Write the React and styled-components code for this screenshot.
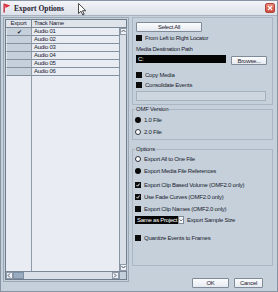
import { Fragment } from 'react'
import styled, { createGlobalStyle } from 'styled-components'

const Global = createGlobalStyle`
  html, body { margin: 0; padding: 0; background: #c5d0da; }
  * { box-sizing: border-box; }
`

const Window = styled.div`
  position: relative;
  width: 278px;
  height: 292px;
  display: flex;
  flex-direction: column;
  background: #c5d0da;
  border: 1px solid #8794a3;
  overflow: hidden;
  font-family: "Liberation Sans", Arial, sans-serif;
  font-size: 6px;
  letter-spacing: -0.25px;
  color: #1b2330;
`
const TitleBar = styled.div`
  height: 15px;
  flex: none;
  display: flex;
  align-items: center;
  padding: 0 2px 0 2px;
  gap: 3px;
  background: linear-gradient(#f3f4f8, #dde1e9);
  border-bottom: 1px solid #a9b3c0;
`
const Title = styled.span`
  flex: 1;
  font-family: "Liberation Serif", "Times New Roman", serif;
  font-weight: bold;
  font-size: 7.5px;
  letter-spacing: 0;
  color: #1e2230;
`
const CloseBtn = styled.div`
  width: 10px;
  height: 10px;
  border-radius: 2px;
  background: linear-gradient(#ee8a7c, #cf4a3a);
  border: 1px solid #b0473c;
  display: flex;
  align-items: center;
  justify-content: center;
`
const Cursor = styled.svg`
  position: absolute;
  left: 77px;
  top: 2px;
`
const Body = styled.div`
  flex: 1;
  display: flex;
  gap: 3px;
  padding: 1px 3px 3px 2px;
`
const LeftPanel = styled.div`
  width: 126px;
  height: 265px;
  padding: 1px;
  border: 1px solid #9aa7b5;
  display: flex;
`
const ListBox = styled.div`
  flex: 1;
  display: grid;
  grid-template-columns: 1fr 7px;
  grid-template-rows: 8px 1fr 8px;
  border: 1px solid #6f7d8c;
  background: #e9ecf2;
`
const Header = styled.div`
  grid-column: 1 / 3;
  display: grid;
  grid-template-columns: 25px 1fr;
  background: #dfe4eb;
  border-bottom: 1px solid #7c8896;
`
const HeadCell = styled.div`
  display: flex;
  align-items: center;
  justify-content: ${(p) => (p.$center ? 'center' : 'flex-start')};
  padding-left: ${(p) => (p.$center ? 0 : 2)}px;
  border-left: ${(p) => (p.$center ? 'none' : '1px solid #7c8896')};
  line-height: 7px;
`
const Rows = styled.div`
  display: grid;
  grid-template-columns: 25px 1fr;
  grid-auto-rows: 8px;
  align-content: start;
  background: linear-gradient(to right, transparent 25px, #8f9aa7 25px, #8f9aa7 26px, transparent 26px);
`
const ExportCell = styled.div`
  background: #c6d0da;
  border-bottom: 1px solid #8391a0;
  border-left: 1px solid #e4e9ef;
  display: flex;
  align-items: center;
  justify-content: center;
  font-size: 6px;
`
const NameCell = styled.div`
  border-left: 1px solid #8f9aa7;
  border-bottom: 1px solid #8391a0;
  padding-left: 2px;
  display: flex;
  align-items: center;
  line-height: 7px;
`
const VScroll = styled.div`
  display: flex;
  flex-direction: column;
  justify-content: space-between;
  background: #d9dfe7;
  border-left: 1px solid #8794a3;
`
const HScroll = styled.div`
  display: flex;
  align-items: stretch;
  background: #d9dfe7;
  border-top: 1px solid #7c8896;
`
const Corner = styled.div`
  background: #c5d0da;
  border-top: 1px solid #7c8896;
  border-left: 1px solid #8794a3;
`
const Arrow = styled.div`
  width: ${(p) => p.$w || 6}px;
  height: ${(p) => p.$h || 6}px;
  background: #eef1f5;
  border: 1px solid #8e9aa8;
  display: flex;
  align-items: center;
  justify-content: center;
  flex: none;
`
const Thumb = styled.div`
  width: 11px;
  background: #9aacbf;
  border: 1px solid #7d8fa3;
`
const Spacer = styled.div`
  flex: 1;
`
const RightPanel = styled.div`
  flex: 1;
  display: flex;
  flex-direction: column;
  margin-right: 1px;
`
const TopBox = styled.div`
  display: flex;
  flex-direction: column;
  align-items: flex-start;
  border: 1px solid #aab6c2;
  padding: 4px 3px 3px 3px;
`
const Button = styled.div`
  width: ${(p) => p.$w}px;
  height: ${(p) => p.$h || 10}px;
  margin-top: ${(p) => p.$mt || 0}px;
  background: linear-gradient(#fbfcfd, #e6eaf0);
  border: 1px solid #7f8b99;
  border-radius: 1px;
  display: flex;
  align-items: center;
  justify-content: center;
  flex: none;
`
const Row = styled.div`
  display: flex;
  align-items: center;
  gap: 3px;
  height: ${(p) => p.$h || 7}px;
  margin-top: ${(p) => p.$mt || 0}px;
`
const Label = styled.div`
  line-height: 7px;
  margin-top: ${(p) => p.$mt || 0}px;
`
const PathRow = styled.div`
  display: flex;
  align-items: flex-start;
  gap: 5px;
  margin-top: 2px;
`
const PathField = styled.div`
  width: 90px;
  height: 8px;
  background: #050505;
  color: #fff;
  padding-left: 2px;
  line-height: 8px;
`
const EmptyField = styled.div`
  width: 130px;
  height: 10px;
  margin-top: 3px;
  background: #cdd6df;
  border: 1px solid #a5b1bd;
`
const Group = styled.fieldset`
  margin: ${(p) => p.$mt}px 0 0 0;
  padding: 0 3px ${(p) => p.$pb}px 2px;
  min-width: 0;
  height: ${(p) => p.$h}px;
  border: 1px solid #aab6c2;
  display: flex;
  flex-direction: column;
  align-items: flex-start;
`
const Legend = styled.legend`
  padding: 0 1px;
  margin-left: 0;
  line-height: 7px;
`
const Check = styled.div`
  width: 6px;
  height: 6px;
  background: #0c0c0c;
  flex: none;
  display: flex;
  align-items: center;
  justify-content: center;
`
const Radio = styled.div`
  width: 6px;
  height: 6px;
  border-radius: 50%;
  flex: none;
  background: ${(p) => (p.$on ? '#0a0a0a' : '#ffffff')};
  border: ${(p) => (p.$on ? 'none' : '1.5px solid #2a2f38')};
`
const Select = styled.div`
  display: flex;
  height: 8px;
`
const SelectValue = styled.div`
  width: 43px;
  background: #050505;
  color: #fff;
  padding-left: 2px;
  line-height: 8px;
`
const SelectArrow = styled.div`
  width: 6px;
  background: #f1f3f6;
  border: 1px solid #7f8b99;
  display: flex;
  align-items: center;
  justify-content: center;
`
const Footer = styled.div`
  display: flex;
  justify-content: flex-end;
  gap: 5px;
  margin-top: auto;
  padding-right: 10px;
`

const tracks = ['Audio 01', 'Audio 02', 'Audio 03', 'Audio 04', 'Audio 05', 'Audio 06']

const Tick = () => (
  <svg width="4" height="4" viewBox="0 0 4 4">
    <path d="M0.5 2 L1.6 3.2 L3.6 0.6" stroke="#fff" strokeWidth="0.9" fill="none" />
  </svg>
)

const Tri = ({ dir }) => {
  const d = {
    up: 'M0.5 3 L2.5 1 L4.5 3',
    down: 'M0.5 1 L2.5 3 L4.5 1',
    left: 'M3 0.5 L1 2.5 L3 4.5',
    right: 'M1 0.5 L3 2.5 L1 4.5',
  }[dir]
  return (
    <svg width="5" height="5" viewBox="0 0 5 5">
      <path d={d} stroke="#3a4250" strokeWidth="0.9" fill="none" />
    </svg>
  )
}

const CheckRow = ({ on, mt, children }) => (
  <Row $mt={mt}>
    <Check>{on && <Tick />}</Check>
    <span>{children}</span>
  </Row>
)

const RadioRow = ({ on, mt, children }) => (
  <Row $mt={mt}>
    <Radio $on={on} />
    <span>{children}</span>
  </Row>
)

export default function App() {
  return (
    <>
      <Global />
      <Window>
        <TitleBar>
          <svg width="8" height="10" viewBox="0 0 8 10">
            <path d="M0.5 0.5 L1.8 0.5 L1.8 9.5 L0.5 9.5 Z" fill="#c21d2c" />
            <path d="M1.8 0.8 L7.5 2.5 L2.5 5 Z" fill="#e0313f" />
          </svg>
          <Title>Export Options</Title>
          <CloseBtn>
            <svg width="6" height="6" viewBox="0 0 6 6">
              <path d="M1 1 L5 5 M5 1 L1 5" stroke="#fff" strokeWidth="1.2" />
            </svg>
          </CloseBtn>
        </TitleBar>
        <Cursor width="9" height="13" viewBox="0 0 9 13">
          <path d="M0.5 0.5 L0.5 10.5 L3 8.2 L4.8 12 L6.2 11.3 L4.5 7.7 L7.8 7.7 Z" fill="#fff" stroke="#222" strokeWidth="0.8" />
        </Cursor>
        <Body>
          <LeftPanel>
            <ListBox>
              <Header>
                <HeadCell $center>Export</HeadCell>
                <HeadCell>Track Name</HeadCell>
              </Header>
              <Rows>
                {tracks.map((t, i) => (
                  <Fragment key={t}>
                    <ExportCell>{i === 0 ? '✔' : ''}</ExportCell>
                    <NameCell>{t}</NameCell>
                  </Fragment>
                ))}
              </Rows>
              <VScroll>
                <Arrow $w={7} $h={7}><Tri dir="up" /></Arrow>
                <Arrow $w={7} $h={7}><Tri dir="down" /></Arrow>
              </VScroll>
              <HScroll>
                <Arrow $w={7} $h={7}><Tri dir="left" /></Arrow>
                <Thumb />
                <Spacer />
                <Arrow $w={7} $h={7}><Tri dir="right" /></Arrow>
              </HScroll>
              <Corner />
            </ListBox>
          </LeftPanel>
          <RightPanel>
            <TopBox>
              <Button $w={66}>Select All</Button>
              <CheckRow mt={2}>From Left to Right Locator</CheckRow>
              <Label $mt={5}>Media Destination Path</Label>
              <PathRow>
                <PathField>C:</PathField>
                <Button $w={36} $h={9} $mt={1}>Browse...</Button>
              </PathRow>
              <CheckRow mt={6}>Copy Media</CheckRow>
              <CheckRow mt={3}>Consolidate Events</CheckRow>
              <EmptyField />
            </TopBox>
            <Group $mt={1} $h={34} $pb={3}>
              <Legend>OMF Version</Legend>
              <RadioRow on mt={3}>1.0 File</RadioRow>
              <RadioRow mt={5}>2.0 File</RadioRow>
            </Group>
            <Group $mt={6} $h={120} $pb={3}>
              <Legend>Options</Legend>
              <RadioRow mt={2}>Export All to One File</RadioRow>
              <RadioRow on mt={5}>Export Media File References</RadioRow>
              <CheckRow on mt={7}>Export Clip Based Volume (OMF2.0 only)</CheckRow>
              <CheckRow on mt={5}>Use Fade Curves (OMF2.0 only)</CheckRow>
              <CheckRow mt={5}>Export Clip Names (OMF2.0 only)</CheckRow>
              <Row $h={8} $mt={4}>
                <Select>
                  <SelectValue>Same as Project</SelectValue>
                  <SelectArrow><Tri dir="down" /></SelectArrow>
                </Select>
                <span>Export Sample Size</span>
              </Row>
              <CheckRow mt={10}>Quantize Events to Frames</CheckRow>
            </Group>
            <Footer>
              <Button $w={37}>OK</Button>
              <Button $w={29}>Cancel</Button>
            </Footer>
          </RightPanel>
        </Body>
      </Window>
    </>
  )
}
